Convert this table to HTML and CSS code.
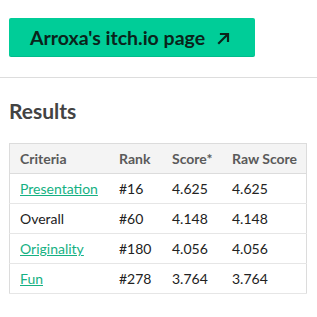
FILE: index.html
```html
<!DOCTYPE html>
<html>
  <head>
    <title>Results</title>
    <link rel="stylesheet" href="styles.css">
  </head>
  <body>
    <div class="top">
      <a class="itch-btn" href="#">
        <span>Arroxa's itch.io page</span>
        <svg class="ext-icon" width="13" height="13" viewBox="0 0 13 13" fill="none" stroke="currentColor" stroke-width="2.2" stroke-linecap="square">
          <path d="M2 11L10.5 2.5"></path>
          <path d="M4 2H11V9"></path>
        </svg>
      </a>
    </div>

    <div class="divider"></div>

    <div class="results">
      <h2>Results</h2>
      <table class="results-table">
        <thead>
          <tr>
            <th class="col-criteria">Criteria</th>
            <th class="col-rank">Rank</th>
            <th class="col-score">Score*</th>
            <th>Raw Score</th>
          </tr>
        </thead>
        <tbody>
          <tr>
            <td><a href="#">Presentation</a></td>
            <td>#16</td>
            <td>4.625</td>
            <td>4.625</td>
          </tr>
          <tr>
            <td>Overall</td>
            <td>#60</td>
            <td>4.148</td>
            <td>4.148</td>
          </tr>
          <tr>
            <td><a href="#">Originality</a></td>
            <td>#180</td>
            <td>4.056</td>
            <td>4.056</td>
          </tr>
          <tr>
            <td><a href="#">Fun</a></td>
            <td>#278</td>
            <td>3.764</td>
            <td>3.764</td>
          </tr>
        </tbody>
      </table>
    </div>
  </body>
</html>
```

FILE: styles.css
```css
body {
  margin: 0;
  font-family: Lato, "Liberation Sans", sans-serif;
  background-color: #ffffff;
  color: #222222;
}
.top {
  padding: 18px 9px 20px;
}
.itch-btn {
  display: inline-flex;
  align-items: center;
  gap: 12px;
  box-sizing: border-box;
  width: 246px;
  height: 39px;
  padding: 0 0 0 21px;
  background-color: #00cd98;
  border-radius: 2px;
  box-shadow: inset 0 -1px 0 rgba(0, 0, 0, 0.08);
  color: #0a241b;
  font-size: 19.5px;
  font-weight: 700;
  text-decoration: none;
  white-space: nowrap;
}
.ext-icon {
  display: block;
  flex-shrink: 0;
  margin-top: 1px;
}
.divider {
  height: 1px;
  background-color: #dddddd;
}
.results {
  padding: 0 9px;
}
h2 {
  margin: 20px 0 20px;
  font-size: 21px;
  font-weight: 700;
  color: #434343;
}
.results-table {
  width: 298px;
  border-collapse: collapse;
  border: 1px solid #dcdcdc;
  font-size: 14px;
}
.results-table th,
.results-table td {
  height: 29px;
  padding: 0 0 0 10px;
  text-align: left;
}
.results-table th {
  background-color: #f4f4f4;
  border-bottom: 1px solid #dcdcdc;
  color: #5a5a5a;
  font-weight: 700;
}
.results-table td {
  border-bottom: 1px solid #e6e6e6;
  color: #222222;
}
.col-criteria {
  width: 89px;
}
.col-rank {
  width: 43px;
}
.col-score {
  width: 50px;
}
.results-table a {
  color: #15b183;
}
```
